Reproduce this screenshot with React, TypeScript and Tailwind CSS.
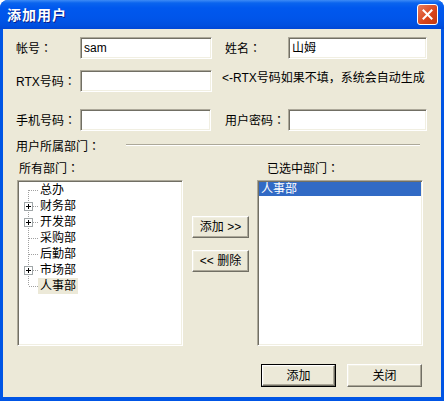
import * as React from "react";

const font = "font-['Tahoma','Liberation_Sans','Noto_Sans_CJK_SC',sans-serif]";

// full-width colon, centred in its cell like the bitmap font
const Colon = () => (
  <span className="font-['Noto_Sans_CJK_TC','Noto_Sans_CJK_SC',sans-serif]">：</span>
);

const Field = ({ value, width }: { value?: string; width: string }) => (
  <div
    className={`${width} h-[22px] bg-white border-t border-l border-t-[#ACA899] border-l-[#ACA899] border-b border-r border-b-white border-r-white shadow-[inset_1px_1px_#716F64,inset_-1px_-1px_#F1EFE2] flex items-center pl-[3px] text-[12px] leading-[14px] text-black`}
  >
    {value}
  </div>
);

const Button = ({ label, width, height }: { label: string; width: string; height: string }) => (
  <div
    className={`${width} ${height} flex items-center justify-center bg-[#ECE9D8] border-t border-l border-t-white border-l-white border-b border-r border-b-[#716F64] border-r-[#716F64] shadow-[inset_-1px_-1px_#ACA899,inset_1px_1px_#F1EFE2] text-[12px] leading-[14px] text-black`}
  >
    {label}
  </div>
);

const TreeNode = ({
  label,
  plus,
  first,
  last,
  selected,
}: {
  label: string;
  plus?: boolean;
  first?: boolean;
  last?: boolean;
  selected?: boolean;
}) => (
  <div className="flex h-[16px] items-center">
    <svg width="19" height="16" className="shrink-0">
      <line
        x1="9.5"
        y1={first ? 8 : 0}
        x2="9.5"
        y2={last ? 8 : 16}
        stroke="#A0A0A0"
        strokeDasharray="1 1"
      />
      <line x1="10" y1="8.5" x2="19" y2="8.5" stroke="#A0A0A0" strokeDasharray="1 1" />
      {plus && (
        <g>
          <rect x="5.5" y="4.5" width="8" height="8" fill="#FFFFFF" stroke="#A0A6A8" />
          <line x1="7" y1="8.5" x2="12" y2="8.5" stroke="#000000" />
          <line x1="9.5" y1="6" x2="9.5" y2="11" stroke="#000000" />
        </g>
      )}
    </svg>
    <span
      className={`px-[2px] h-[16px] leading-[16px] text-[12px] text-black ${selected ? "bg-[#ECE9D8]" : ""}`}
    >
      {label}
    </span>
  </div>
);

const App = () => {
  const depts = [
    { label: "总办" },
    { label: "财务部", plus: true },
    { label: "开发部", plus: true },
    { label: "采购部" },
    { label: "后勤部" },
    { label: "市场部", plus: true },
    { label: "人事部", selected: true },
  ];

  return (
    <div className={`w-[444px] h-[401px] flex flex-col bg-[#0055E5] rounded-t-[8px] overflow-hidden ${font}`}>
      {/* title bar */}
      <div className="h-[29px] shrink-0 flex items-center pl-[7px] pr-[6px] bg-[linear-gradient(to_bottom,#3D8BF6_0px,#0A64EE_3px,#0058EE_8px,#0055EA_18px,#0050E0_25px,#0046D6_29px)]">
        <span className="text-white font-bold text-[14px] leading-[16px] [text-shadow:1px_1px_#0A1E8C] tracking-[1px]">
          添加用户
        </span>
        <div className="ml-auto w-[21px] h-[21px] rounded-[3px] border border-white bg-[linear-gradient(135deg,#E97C5C,#D8431A_60%,#C23A12)] flex items-center justify-center">
          <svg width="11" height="11" viewBox="0 0 11 11">
            <path d="M1.5 1.5 L9.5 9.5 M9.5 1.5 L1.5 9.5" stroke="#FFFFFF" strokeWidth="2" strokeLinecap="square" />
          </svg>
        </div>
      </div>

      {/* body */}
      <div className="flex-1 mx-[3px] mb-[4px] bg-[#ECE9D8] flex flex-col pl-[13px] text-[12px] leading-[14px] text-black">
        <div className="mt-[8px] flex items-center h-[22px]">
          <span className="w-[64px]">帐号<Colon /></span>
          <Field width="w-[132px]" value="sam" />
          <span className="ml-[13px] w-[63px]">姓名<Colon /></span>
          <Field width="w-[139px]" value="山姆" />
        </div>

        <div className="mt-[11px] flex h-[22px]">
          <span className="w-[64px] self-center">RTX号码<Colon /></span>
          <Field width="w-[132px]" />
          <span className="ml-[10px] pt-[1px]">&lt;-RTX号码如果不填，系统会自动生成</span>
        </div>

        <div className="mt-[17px] flex items-center h-[22px]">
          <span className="w-[64px]">手机号码<Colon /></span>
          <Field width="w-[131px]" />
          <span className="ml-[14px] w-[63px]">用户密码<Colon /></span>
          <Field width="w-[139px]" />
        </div>

        <div className="mt-[8px] flex items-center h-[14px]">
          <span className="w-[110px]">用户所属部门<Colon /></span>
          <div className="w-[294px] h-[2px] mb-[3px] border-t border-t-[#ACA899] border-b border-b-white" />
        </div>

        <div className="mt-[8px] flex items-center h-[14px]">
          <span className="pl-[3px] w-[251px]">所有部门<Colon /></span>
          <span>已选中部门<Colon /></span>
        </div>

        <div className="mt-[5px] flex">
          <div className="ml-[1px] w-[166px] h-[166px] bg-white border-t border-l border-t-[#ACA899] border-l-[#ACA899] border-b border-r border-b-white border-r-white shadow-[inset_1px_1px_#716F64,inset_-1px_-1px_#F1EFE2] pt-[1px] pl-[1px]">
            {depts.map((d, i) => (
              <TreeNode
                key={d.label}
                label={d.label}
                plus={d.plus}
                selected={d.selected}
                first={i === 0}
                last={i === depts.length - 1}
              />
            ))}
          </div>

          <div className="ml-[9px] w-[57px] flex flex-col">
            <div className="mt-[36px]">
              <Button label="添加 >>" width="w-[57px]" height="h-[22px]" />
            </div>
            <div className="mt-[12px]">
              <Button label="<< 删除" width="w-[57px]" height="h-[22px]" />
            </div>
          </div>

          <div className="ml-[8px] w-[166px] h-[166px] bg-white border-t border-l border-t-[#ACA899] border-l-[#ACA899] border-b border-r border-b-white border-r-white shadow-[inset_1px_1px_#716F64,inset_-1px_-1px_#F1EFE2] pt-[1px] px-[1px]">
            <div className="h-[14px] bg-[#316AC5] text-white pl-[2px] leading-[14px]">人事部</div>
          </div>
        </div>

        <div className="mt-[18px] flex pl-[245px]">
          <div className="border border-black">
            <Button label="添加" width="w-[73px]" height="h-[21px]" />
          </div>
          <div className="ml-[11px]">
            <Button label="关闭" width="w-[75px]" height="h-[23px]" />
          </div>
        </div>
      </div>
    </div>
  );
};

export default App;
